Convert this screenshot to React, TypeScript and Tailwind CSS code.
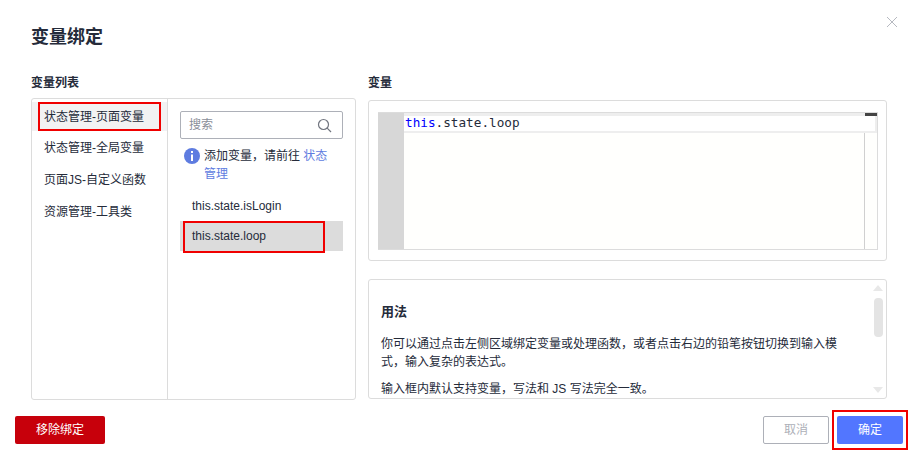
import React from "react";

const F = { fontFamily: '"Liberation Sans", "Noto Sans CJK SC", sans-serif' };

function RedBox({ className }: { className: string }) {
  return <div className={`absolute border-2 border-[#f00000] ${className}`} />;
}

function Info() {
  return (
    <svg width="16" height="16" viewBox="0 0 16 16" className="shrink-0">
      <circle cx="8" cy="8" r="8" fill="#5e7ce0" />
      <rect x="7" y="3" width="2" height="2" fill="#fff" />
      <rect x="7" y="6.5" width="2" height="6.5" fill="#fff" />
    </svg>
  );
}

export default function App() {
  return (
    <div style={F} className="relative flex h-[457px] w-[915px] flex-col overflow-hidden bg-white text-[12px] text-[#252b3a]">
      <svg width="12" height="12" viewBox="0 0 12 12" className="absolute right-[17px] top-[16px]">
        <path d="M1 1l10 10M11 1L1 11" stroke="#b6b9c0" strokeWidth="1" fill="none" />
      </svg>

      <h1 className="ml-[31px] mt-[25px] h-[24px] text-[18px] font-bold leading-[24px]">变量绑定</h1>

      <div className="ml-[31px] mt-[26px] flex gap-[12px]">
        <div className="w-[325px]">
          <div className="h-[23px] font-bold leading-[16px]">变量列表</div>
          <div className="flex h-[302px] rounded-[3px] border border-[#dcdcdc]">
            <div className="w-[136px] shrink-0 border-r border-[#dcdcdc] pt-[3px]">
              <div className="relative flex h-[29px] items-center bg-[#f2f2f3] pl-[12px]">
                状态管理-页面变量
                <RedBox className="left-[6px] top-0 h-[29px] w-[123px]" />
              </div>
              <div className="mt-[1px] flex h-[32px] items-center pl-[12px]">状态管理-全局变量</div>
              <div className="flex h-[32px] items-center pl-[12px]">页面JS-自定义函数</div>
              <div className="flex h-[32px] items-center pl-[12px]">资源管理-工具类</div>
            </div>
            <div className="flex-1 pl-[12px] pr-[12px] pt-[12px]">
              <div className="flex h-[28px] items-center justify-between rounded-[2px] border border-[#adb0b8] pl-[8px] pr-[10px] text-[#8a8e99]">
                <span>搜索</span>
                <svg width="15" height="15" viewBox="0 0 15 15" fill="none" stroke="#71757f" strokeWidth="1.2">
                  <circle cx="6.5" cy="6.5" r="5" />
                  <path d="M10.2 10.2L14 14" />
                </svg>
              </div>
              <div className="mt-[8px] flex gap-[4px] pl-[4px] leading-[18px]">
                <div className="pt-[1px]"><Info /></div>
                <div className="w-[130px]">
                  添加变量，请前往 <span className="text-[#5e7ce0]">状态管理</span>
                </div>
              </div>
              <div className="mt-[8px] flex h-[30px] items-center pl-[12px]">this.state.isLogin</div>
              <div className="relative flex h-[30px] items-center bg-[#dcdcdc] pl-[12px]">
                this.state.loop
                <RedBox className="left-[3px] top-0 h-[32px] w-[142px]" />
              </div>
            </div>
          </div>
        </div>

        <div className="w-[519px]">
          <div className="h-[25px] font-bold leading-[16px]">变量</div>
          <div className="h-[161px] rounded-[3px] border border-[#dcdcdc] pb-[10px] pl-[9px] pr-[8px] pt-[11px]">
            <div className="flex h-[138px] border-b border-r border-t border-[#dcdcdc] bg-[#fffffd]">
              <div className="w-[26px] shrink-0 bg-[#d7d7d7]" />
              <div className="relative flex min-w-0 flex-1">
                <div className="flex-1" />
                <div className="w-[13px] shrink-0 border-l border-[#d0d0d0]" />
                <div
                  style={{ fontFamily: '"DejaVu Sans Mono", monospace' }}
                  className="absolute inset-x-0 top-0 h-[20px] border-y-[2px] border-t-[3px] border-r-[2px] border-[#eeeeee] bg-white pl-[1px] text-[12.7px] leading-[14px]"
                >
                  <span className="text-[#0000ff]">this</span>.state.loop
                </div>
                <div className="absolute right-0 top-0 h-[3px] w-[12px] bg-[#444]" />
              </div>
            </div>
          </div>

          <div className="relative mt-[18px] h-[120px] overflow-hidden rounded-[3px] border border-[#dcdcdc] pl-[12px]">
            <div className="w-[460px]">
              <h2 className="mt-[23px] text-[13px] font-bold leading-[18px]">用法</h2>
              <p className="mt-[14px] leading-[18px]">
                你可以通过点击左侧区域绑定变量或处理函数，或者点击右边的铅笔按钮切换到输入模式，输入复杂的表达式。
              </p>
              <p className="mt-[9px] leading-[18px]">输入框内默认支持变量，写法和 JS 写法完全一致。</p>
            </div>
            <div className="absolute right-[2px] top-0 flex h-full w-[12px] flex-col items-center">
              <div className="mt-[5px] h-0 w-0 border-x-[5px] border-b-[6px] border-x-transparent border-b-[#e8e8e8]" />
              <div className="mt-[7px] h-[39px] w-[9px] rounded-[4px] bg-[#e4e4e4]" />
              <div className="mt-auto mb-[5px] h-0 w-0 border-x-[5px] border-t-[6px] border-x-transparent border-t-[#e8e8e8]" />
            </div>
          </div>
        </div>
      </div>

      <div className="mt-[10px] flex items-center justify-between pl-[15px] pr-[7px]">
        <button className="h-[28px] w-[90px] rounded-[2px] bg-[#c7000b] text-white">移除绑定</button>
        <div className="flex items-center gap-[3px]">
          <button className="h-[28px] w-[66px] rounded-[2px] border border-[#adb0b8] text-[#adb0b8]">取消</button>
          <div className="border-2 border-[#f00000] px-[3px] py-[4px]">
            <button className="block h-[28px] w-[66px] rounded-[2px] bg-[#5276ff] text-white">确定</button>
          </div>
        </div>
      </div>
    </div>
  );
}
